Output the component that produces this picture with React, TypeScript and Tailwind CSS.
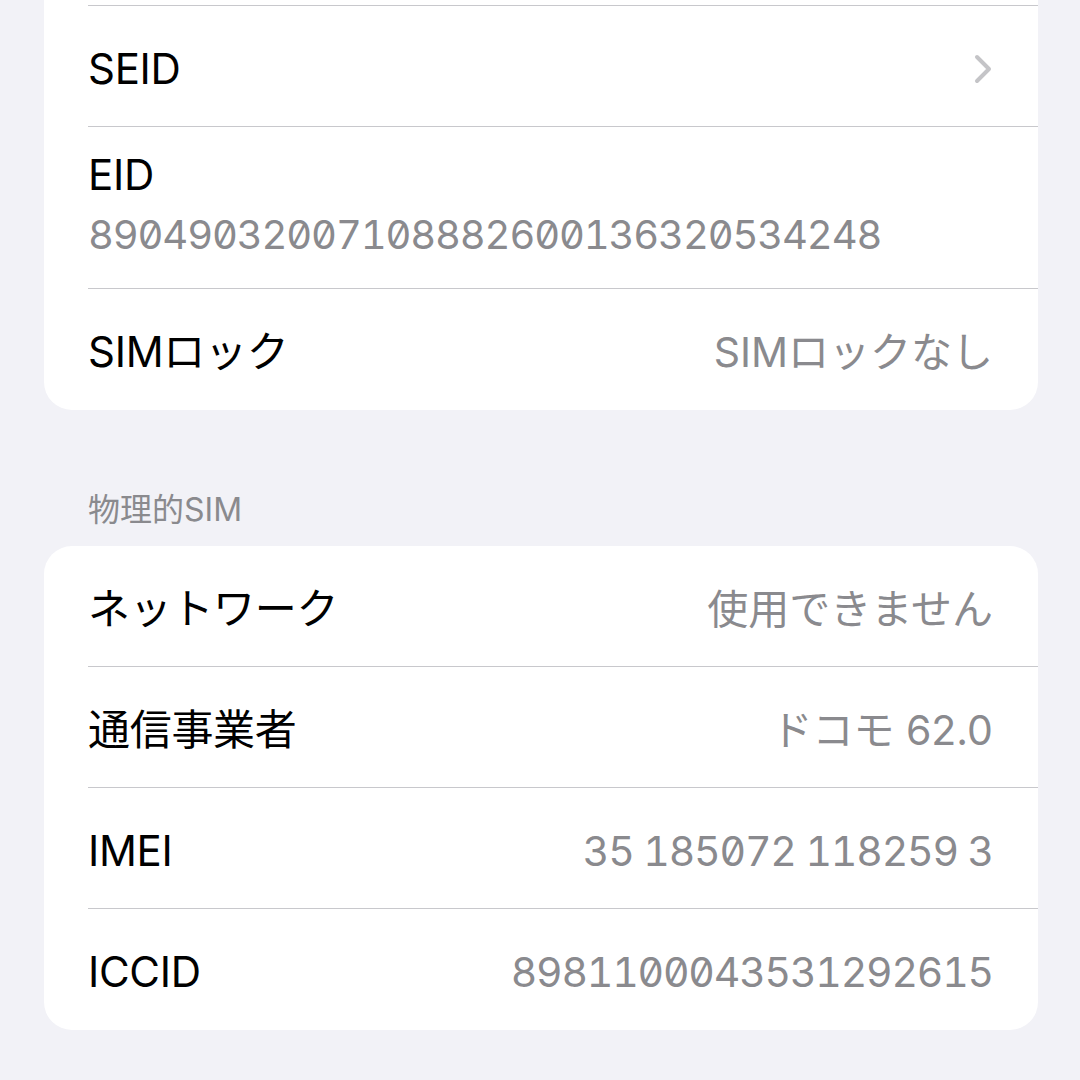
import React from "react";

const font = { fontFamily: 'Inter, "Noto Sans CJK JP", sans-serif' };

function Chevron() {
  return (
    <svg width="20" height="32" viewBox="0 0 20 32" fill="none">
      <polyline points="4,4 16,16 4,28" stroke="#c4c4c7" strokeWidth="4" strokeLinecap="round" strokeLinejoin="round" />
    </svg>
  );
}

function Row({
  label,
  value,
  chevron,
  first,
  h = "h-[121px]",
  num,
}: {
  label: string;
  value?: string;
  chevron?: boolean;
  first?: boolean;
  h?: string;
  num?: boolean;
}) {
  return (
    <div className="pl-[44px]">
      <div
        className={`${h} flex items-center justify-between pr-[45px] pt-[5px] ${first ? "" : "border-t border-[#c8c8cc]"}`}
      >
        <span className="text-[42px] leading-[50px] text-black tracking-[-0.3px]">{label}</span>
        {chevron ? (
          <Chevron />
        ) : value ? (
          <span
            className={`text-[41px] leading-[50px] text-[#8a8a8e] ${num ? "tabular-nums slashed-zero tracking-[-1.2px]" : "tracking-[0px]"}`}
          >
            {value}
          </span>
        ) : null}
      </div>
    </div>
  );
}

export default function App() {
  return (
    <div className="w-[1080px] h-[1080px] overflow-hidden bg-[#f2f2f7] pl-[44px] pr-[42px]" style={font}>
      <div className="bg-white rounded-b-[28px]">
        <div className="h-[5px]" />
        <Row label="SEID" chevron />
        <div className="pl-[44px]">
          <div className="border-t border-[#c8c8cc] h-[162px] pt-[23px] flex flex-col">
            <span className="text-[42px] leading-[50px] text-black tracking-[-0.3px]">EID</span>
            <span className="mt-[10px] text-[40px] leading-[50px] text-[#8a8a8e] tabular-nums slashed-zero tracking-[-1.15px]">
              89049032007108882600136320534248
            </span>
          </div>
        </div>
        <Row label="SIMロック" value="SIMロックなし" h="h-[122px]" />
      </div>

      <div className="pl-[44px] mt-[80px] mb-[16px] h-[40px] leading-[40px] text-[32px] text-[#8a8a8e]">
        物理的SIM
      </div>

      <div className="bg-white rounded-[28px]">
        <Row label="ネットワーク" value="使用できません" first h="h-[120px]" />
        <Row label="通信事業者" value="ドコモ 62.0" />
        <Row label="IMEI" value="35 185072 118259 3" num />
        <Row label="ICCID" value="8981100043531292615" num h="h-[122px]" />
      </div>
    </div>
  );
}
